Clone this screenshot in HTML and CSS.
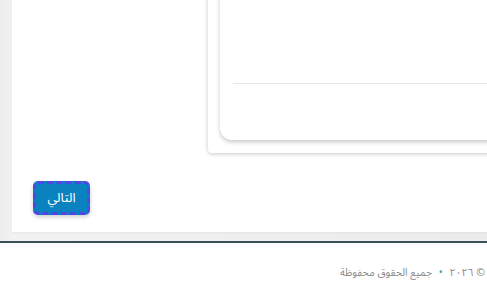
FILE: index.html
```html
<!DOCTYPE html>
<html lang="ar">
<head>
  <meta charset="UTF-8" />
  <meta name="viewport" content="width=device-width, initial-scale=1.0"/>
  <title>الخطوة التالية</title>
  <link rel="stylesheet" href="styles.css">
</head>
<body>

<div class="page">
  <main class="main">
    <section class="panel">
      <div class="outer-card">
        <div class="inner-card">
          <div class="inner-body"></div>
          <div class="inner-foot"></div>
        </div>
      </div>
      <div class="actions">
        <button class="next-btn" type="button">التالي</button>
      </div>
    </section>
  </main>

  <footer class="site-footer">
    <p class="copy" dir="rtl">© ٢٠٢٦ <span class="dot">•</span> جميع الحقوق محفوظة</p>
  </footer>
</div>

</body>
</html>
```

FILE: styles.css
```css
html, body {
  margin: 0;
  padding: 0;
  overflow: hidden;
}

body {
  font-family: "Noto Sans Arabic", "DejaVu Sans", "Noto Sans", sans-serif;
  background: #fff;
}

.page {
  display: flex;
  flex-direction: column;
  height: 291px;
}

.main {
  padding: 0 0 9px 12px;
  background: linear-gradient(to right, #ececec, #f2f2f2 12px, #ececec);
}

.panel {
  height: 232px;
  background: #fff;
  box-shadow: 0 1px 2px rgba(0, 0, 0, 0.06);
  display: flex;
  flex-direction: column;
}

.outer-card {
  margin: -30px -30px 0 196px;
  height: 170px;
  padding: 0 0 13px 12px;
  background: #fff;
  border-radius: 4px;
  box-shadow: 0 1px 4px rgba(0, 0, 0, 0.22);
  display: flex;
}

.inner-card {
  flex: 1;
  background: #fff;
  border-radius: 12px;
  box-shadow: 0 2px 4px rgba(0, 0, 0, 0.22);
  display: flex;
  flex-direction: column;
}

.inner-body {
  flex: 1;
}

.inner-foot {
  height: 56px;
  margin-left: 13px;
  border-top: 1px solid #e8e8e8;
}

.actions {
  padding: 27px 0 0 21px;
}

.next-btn {
  width: 57px;
  height: 34px;
  padding: 0;
  background: #0b82c0;
  color: #fff;
  font-family: inherit;
  font-size: 13px;
  font-weight: normal;
  border: 3px dashed #4f46e5;
  border-radius: 5px;
  box-shadow: 0 2px 4px rgba(0, 0, 0, 0.2);
  cursor: pointer;
}

.site-footer {
  flex: 1;
  border-top: 2px solid #3d4f5b;
  background: #fff;
  display: flex;
  justify-content: flex-end;
}

.copy {
  margin: 19px 2px 0 0;
  font-size: 10.5px;
  color: #8a8a8a;
  white-space: nowrap;
}

.dot {
  color: #3b9fb3;
  margin: 0 4px;
}
```
